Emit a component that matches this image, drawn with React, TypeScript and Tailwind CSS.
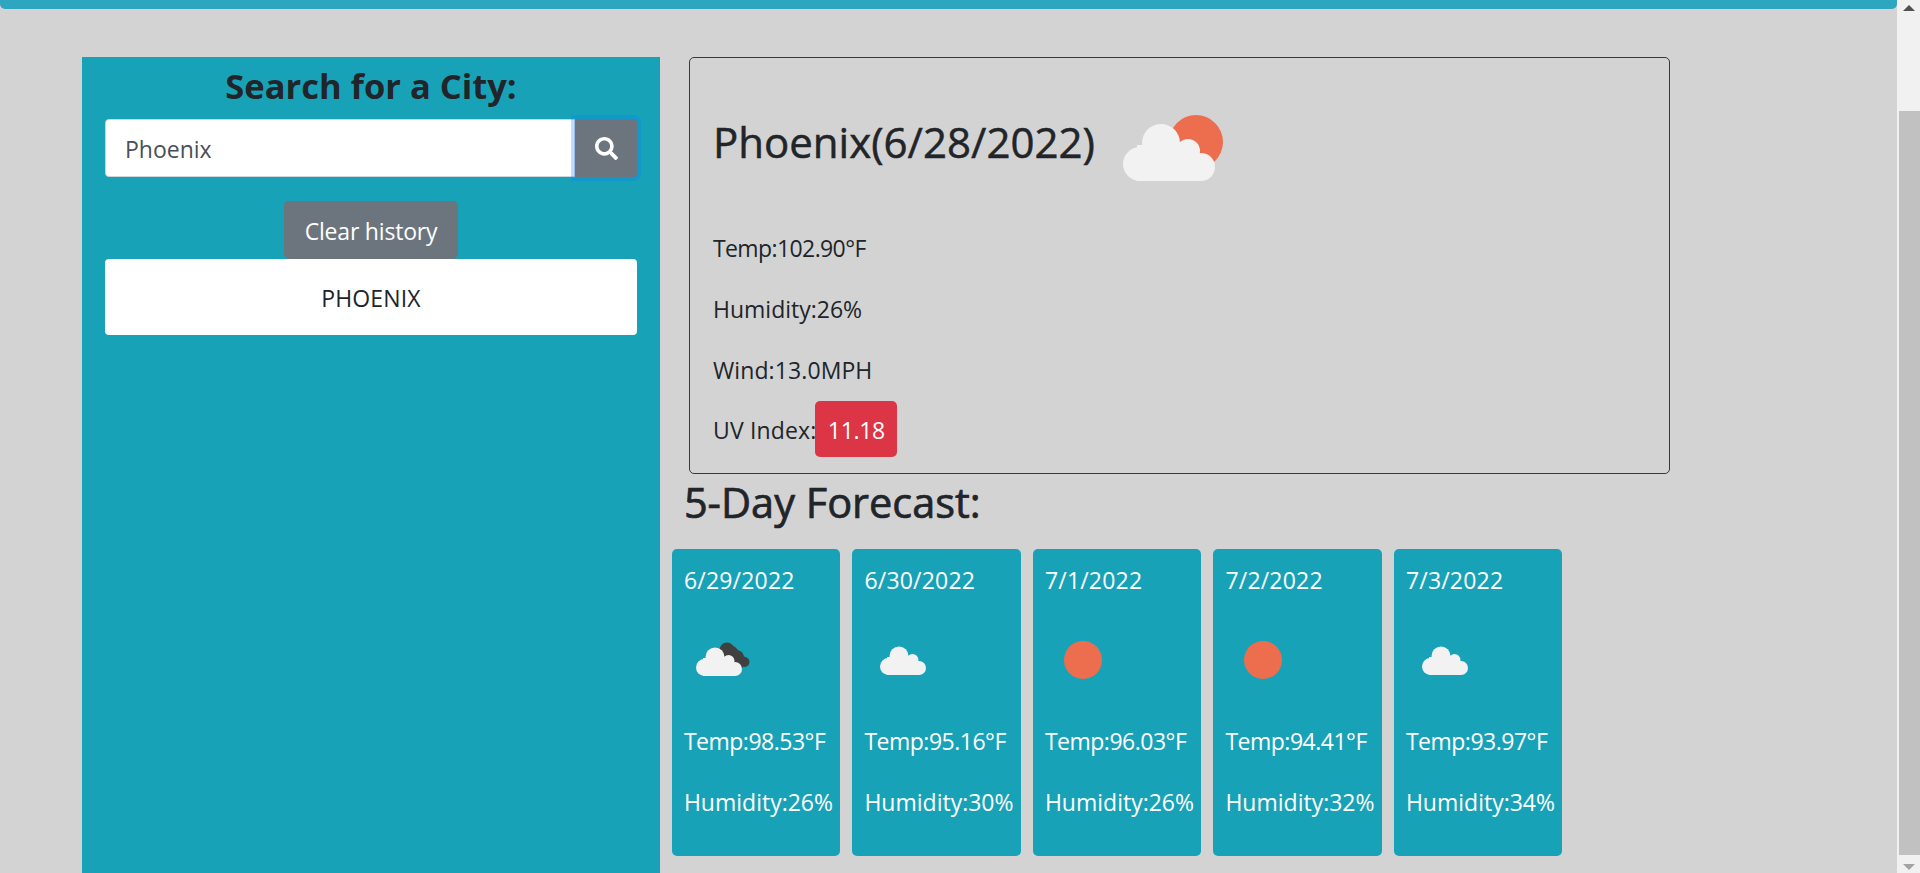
import { FaSearch } from "react-icons/fa";

const Cloud = ({ x = 0, y = 0, s = 1 }: { x?: number; y?: number; s?: number }) => (
  <g transform={`translate(${x} ${y}) scale(${s})`} fill="#f2f2f2">
    <circle cx="17" cy="49" r="17" />
    <circle cx="38" cy="28" r="19" />
    <circle cx="65" cy="36" r="12" />
    <circle cx="78" cy="52" r="14" />
    <rect x="14" y="30" width="51" height="36" />
    <rect x="60" y="44" width="18" height="22" />
  </g>
);

const SUN = "#ed6e4e";

const Icon = ({ kind }: { kind: string }) => (
  <svg viewBox="0 0 76 76" className="block w-[76px] h-[76px]">
    {kind === "sun" && <circle cx="38" cy="38" r="19" fill={SUN} />}
    {kind === "cloud" && <Cloud x={16} y={20} s={0.5} />}
    {kind === "dark" && (
      <>
        <g fill="#404040">
          <circle cx="43" cy="28" r="7.5" />
          <circle cx="54" cy="34" r="5.5" />
          <circle cx="60.5" cy="40" r="5" />
          <path d="M40 30 L50 24 L64 38 L58 46 L44 40 Z" />
        </g>
        <Cloud x={12} y={21} s={0.5} />
      </>
    )}
  </svg>
);

const days = [
  { d: "6/29/2022", i: "dark", t: "98.53", h: "26" },
  { d: "6/30/2022", i: "cloud", t: "95.16", h: "30" },
  { d: "7/1/2022", i: "sun", t: "96.03", h: "26" },
  { d: "7/2/2022", i: "sun", t: "94.41", h: "32" },
  { d: "7/3/2022", i: "cloud", t: "93.97", h: "34" },
];

export default function App() {
  return (
    <div className="flex h-[873px] w-[1920px] overflow-hidden bg-[#d3d3d3] text-[#212529] font-['Open_Sans',sans-serif] text-[23px]">
      <div className="flex flex-col w-[1897px]">
        <div className="h-[9px] shrink-0 bg-[#2ea6bf] rounded-b-[5px]" />
        <div className="flex flex-1 pt-[48px] pl-[82px]">
          <aside className="w-[578px] bg-[#18a2b8] px-[23px] flex flex-col items-stretch">
            <h2 className="h-[60px] mb-[2px] pb-[2px] flex items-center justify-center font-bold text-[34.5px] leading-none">
              Search for a City:
            </h2>
            <div className="flex h-[58px]">
              <div className="flex-1 flex items-center bg-white rounded-l-[4px] border border-[#ced4da] pl-[19px] pt-[2px] text-[#495057]">
                Phoenix
              </div>
              <button className="relative z-10 w-[62px] bg-[#6c757d] rounded-r-[4px] flex items-center justify-center text-white text-[23px] shadow-[0_0_0_4px_rgba(0,123,255,0.25)]">
                <FaSearch />
              </button>
            </div>
            <div className="flex justify-center mt-[24px]">
              <button className="h-[58px] w-[174px] pt-[3px] bg-[#6c757d] text-white rounded-[5px] tracking-[-0.2px]">Clear history</button>
            </div>
            <div className="h-[76px] pt-[3px] bg-white rounded-[4px] flex items-center justify-center tracking-[0.15px]">PHOENIX</div>
          </aside>
          <main className="ml-[11.9px] flex flex-col">
            <section className="ml-[17.1px] w-[981px] h-[417px] border border-[#343a40] rounded-[5px] pl-[23px] flex flex-col">
              <div className="flex items-center h-[131px] shrink-0 pt-[40px]">
                <h1 className="text-[42px] leading-none font-normal mb-[4px] [-webkit-text-stroke:0.5px_#212529]">Phoenix(6/28/2022)</h1>
                <svg viewBox="0 0 100 66" className="block w-[100px] h-[66px] ml-[28px] mt-[8px]">
                  <circle cx="73" cy="27" r="27" fill={SUN} />
                  <Cloud />
                </svg>
              </div>
              <p className="mt-[29px] h-[61px] leading-[61px] tracking-[-0.6px]">Temp:102.90°F</p>
              <p className="h-[61px] leading-[61px]">Humidity:26%</p>
              <p className="h-[61px] leading-[61px] tracking-[0.1px]">Wind:13.0MPH</p>
              <div className="flex items-center h-[56px]">
                <span className="pt-[3px] tracking-[0.15px]">UV Index:</span>
                <span className="-ml-[1px] pt-[2px] flex items-center justify-center w-[82px] h-[56px] bg-[#dc3545] rounded-[5px] text-white tracking-[-0.3px]">11.18</span>
              </div>
            </section>
            <h2 className="ml-[12px] h-[75px] pb-[18px] flex items-center text-[41.5px] font-normal leading-none [-webkit-text-stroke:0.7px_#212529]">5-Day Forecast:</h2>
            <div className="flex gap-[12px]">
              {days.map((x) => (
                <article key={x.d} className="w-[168.5px] h-[307px] bg-[#18a2b8] rounded-[5px] text-white pl-[12px] flex flex-col whitespace-nowrap">
                  <p className="h-[32px] mt-[15px] leading-[32px] tracking-[0.2px]">{x.d}</p>
                  <div className="mt-[26px]">
                    <Icon kind={x.i} />
                  </div>
                  <p className="mt-[27px] h-[32px] leading-[32px] tracking-[-0.5px]">Temp:{x.t}°F</p>
                  <p className="mt-[29px] h-[32px] leading-[32px]">Humidity:{x.h}%</p>
                </article>
              ))}
            </div>
          </main>
        </div>
      </div>
      <div className="w-[23px] shrink-0 bg-[#f1f1f1] flex flex-col items-end">
        <div className="h-[111px] w-full flex justify-center pt-[5px]">
          <svg viewBox="0 0 12 6" className="w-[12px] h-[6px]"><path d="M6 0 L12 6 H0 Z" fill="#505050" /></svg>
        </div>
        <div className="h-[744px] w-[21px] bg-[#c1c1c1]" />
        <div className="flex-1 w-full flex justify-center pt-[9px]">
          <svg viewBox="0 0 12 6" className="w-[12px] h-[6px]"><path d="M0 0 H12 L6 6 Z" fill="#a3a3a3" /></svg>
        </div>
      </div>
    </div>
  );
}
